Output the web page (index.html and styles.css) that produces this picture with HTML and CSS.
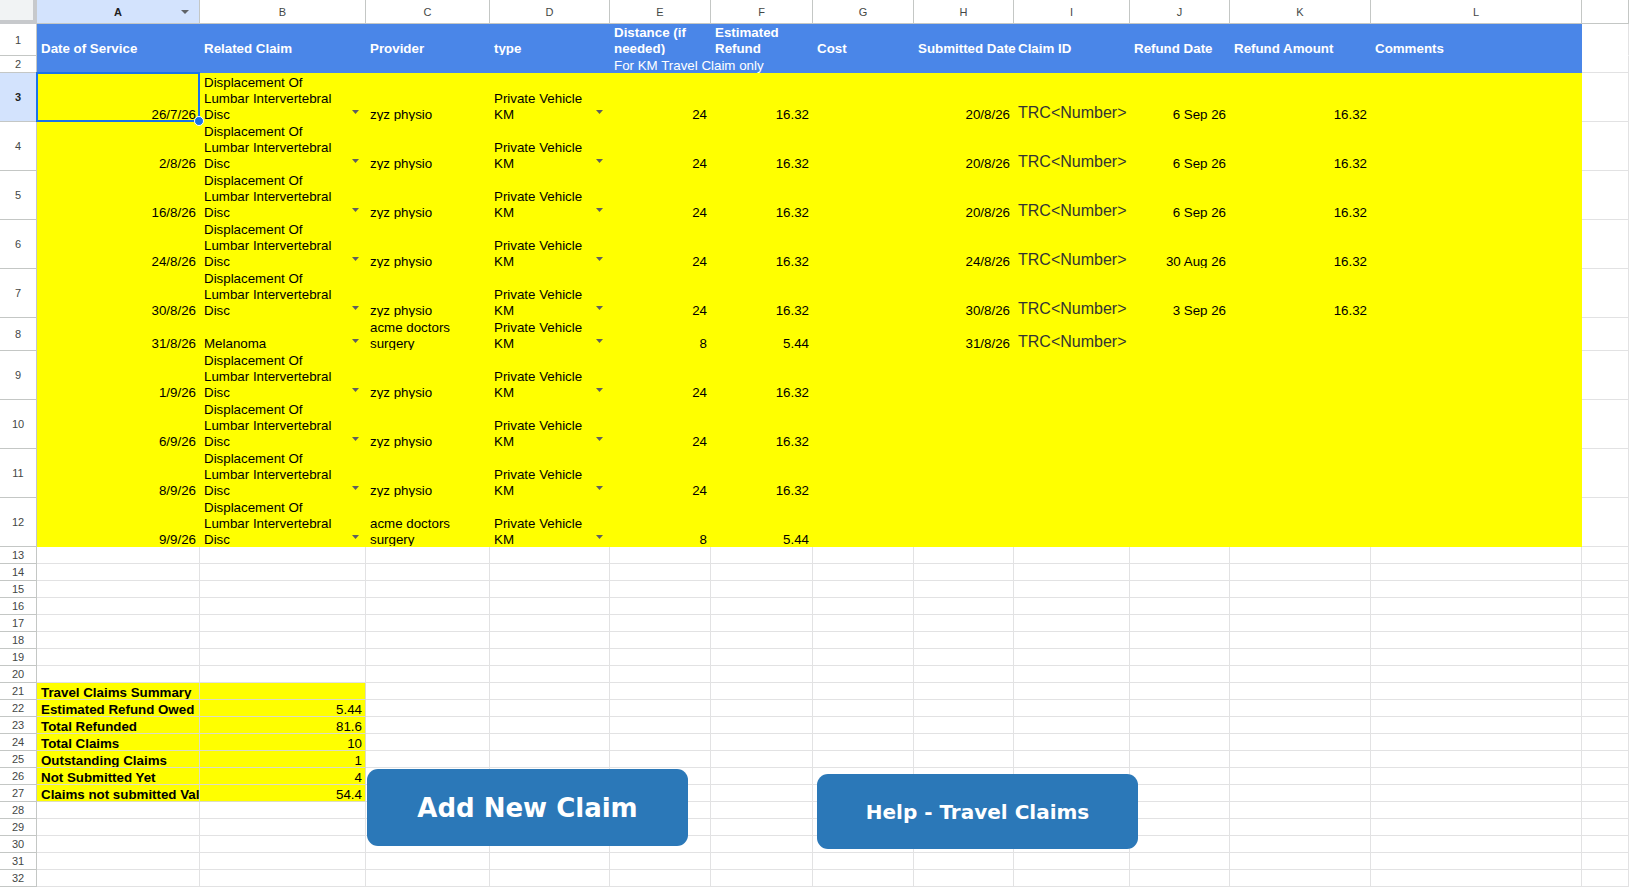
FILE: index.html
```html
<!DOCTYPE html>
<html lang="en">
<head>
<meta charset="utf-8">
<title>Travel Claims</title>
<link rel="stylesheet" href="styles.css">
</head>
<body>
<div class="sheet">
<div class="cn"></div><div class="ch sel">A<svg class="farr" viewBox="0 0 8 4"><path d="M0 0h8L4 4z"/></svg></div><div class="ch">B</div><div class="ch">C</div><div class="ch">D</div><div class="ch">E</div><div class="ch">F</div><div class="ch">G</div><div class="ch">H</div><div class="ch">I</div><div class="ch">J</div><div class="ch">K</div><div class="ch">L</div><div class="ch"></div>

<div class="rh">1</div><div class="b">Date of Service</div><div class="b">Related Claim</div><div class="b">Provider</div><div class="b">type</div><div class="b w">Distance (if needed)</div><div class="b w">Estimated Refund</div><div class="b">Cost</div><div class="b ov">Submitted Date</div><div class="b">Claim ID</div><div class="b">Refund Date</div><div class="b">Refund Amount</div><div class="b">Comments</div><div class="nb"></div>

<div class="rh">2</div><div class="b"></div><div class="b"></div><div class="b"></div><div class="b"></div><div class="b n ov">For KM Travel Claim only</div><div class="b"></div><div class="b"></div><div class="b"></div><div class="b"></div><div class="b"></div><div class="b"></div><div class="b"></div><div></div>

<div class="rh sel">3</div><div class="y r">26/7/26</div><div class="y dd"><span>Displacement Of Lumbar Intervertebral Disc</span><svg class="arr" viewBox="0 0 7 4"><path d="M0 0h7L3.5 4z"/></svg></div><div class="y">zyz physio</div><div class="y dd"><span>Private Vehicle KM</span><svg class="arr" viewBox="0 0 7 4"><path d="M0 0h7L3.5 4z"/></svg></div><div class="y r">24</div><div class="y r">16.32</div><div class="y"></div><div class="y r">20/8/26</div><div class="y trc">TRC&lt;Number&gt;</div><div class="y r">6 Sep 26</div><div class="y r">16.32</div><div class="y"></div><div></div>

<div class="rh">4</div><div class="y r">2/8/26</div><div class="y dd"><span>Displacement Of Lumbar Intervertebral Disc</span><svg class="arr" viewBox="0 0 7 4"><path d="M0 0h7L3.5 4z"/></svg></div><div class="y">zyz physio</div><div class="y dd"><span>Private Vehicle KM</span><svg class="arr" viewBox="0 0 7 4"><path d="M0 0h7L3.5 4z"/></svg></div><div class="y r">24</div><div class="y r">16.32</div><div class="y"></div><div class="y r">20/8/26</div><div class="y trc">TRC&lt;Number&gt;</div><div class="y r">6 Sep 26</div><div class="y r">16.32</div><div class="y"></div><div></div>

<div class="rh">5</div><div class="y r">16/8/26</div><div class="y dd"><span>Displacement Of Lumbar Intervertebral Disc</span><svg class="arr" viewBox="0 0 7 4"><path d="M0 0h7L3.5 4z"/></svg></div><div class="y">zyz physio</div><div class="y dd"><span>Private Vehicle KM</span><svg class="arr" viewBox="0 0 7 4"><path d="M0 0h7L3.5 4z"/></svg></div><div class="y r">24</div><div class="y r">16.32</div><div class="y"></div><div class="y r">20/8/26</div><div class="y trc">TRC&lt;Number&gt;</div><div class="y r">6 Sep 26</div><div class="y r">16.32</div><div class="y"></div><div></div>

<div class="rh">6</div><div class="y r">24/8/26</div><div class="y dd"><span>Displacement Of Lumbar Intervertebral Disc</span><svg class="arr" viewBox="0 0 7 4"><path d="M0 0h7L3.5 4z"/></svg></div><div class="y">zyz physio</div><div class="y dd"><span>Private Vehicle KM</span><svg class="arr" viewBox="0 0 7 4"><path d="M0 0h7L3.5 4z"/></svg></div><div class="y r">24</div><div class="y r">16.32</div><div class="y"></div><div class="y r">24/8/26</div><div class="y trc">TRC&lt;Number&gt;</div><div class="y r">30 Aug 26</div><div class="y r">16.32</div><div class="y"></div><div></div>

<div class="rh">7</div><div class="y r">30/8/26</div><div class="y dd"><span>Displacement Of Lumbar Intervertebral Disc</span><svg class="arr" viewBox="0 0 7 4"><path d="M0 0h7L3.5 4z"/></svg></div><div class="y">zyz physio</div><div class="y dd"><span>Private Vehicle KM</span><svg class="arr" viewBox="0 0 7 4"><path d="M0 0h7L3.5 4z"/></svg></div><div class="y r">24</div><div class="y r">16.32</div><div class="y"></div><div class="y r">30/8/26</div><div class="y trc">TRC&lt;Number&gt;</div><div class="y r">3 Sep 26</div><div class="y r">16.32</div><div class="y"></div><div></div>

<div class="rh">8</div><div class="y r">31/8/26</div><div class="y dd"><span>Melanoma</span><svg class="arr" viewBox="0 0 7 4"><path d="M0 0h7L3.5 4z"/></svg></div><div class="y w">acme doctors surgery</div><div class="y dd"><span>Private Vehicle KM</span><svg class="arr" viewBox="0 0 7 4"><path d="M0 0h7L3.5 4z"/></svg></div><div class="y r">8</div><div class="y r">5.44</div><div class="y"></div><div class="y r">31/8/26</div><div class="y trc">TRC&lt;Number&gt;</div><div class="y"></div><div class="y"></div><div class="y"></div><div></div>

<div class="rh">9</div><div class="y r">1/9/26</div><div class="y dd"><span>Displacement Of Lumbar Intervertebral Disc</span><svg class="arr" viewBox="0 0 7 4"><path d="M0 0h7L3.5 4z"/></svg></div><div class="y">zyz physio</div><div class="y dd"><span>Private Vehicle KM</span><svg class="arr" viewBox="0 0 7 4"><path d="M0 0h7L3.5 4z"/></svg></div><div class="y r">24</div><div class="y r">16.32</div><div class="y"></div><div class="y"></div><div class="y"></div><div class="y"></div><div class="y"></div><div class="y"></div><div></div>

<div class="rh">10</div><div class="y r">6/9/26</div><div class="y dd"><span>Displacement Of Lumbar Intervertebral Disc</span><svg class="arr" viewBox="0 0 7 4"><path d="M0 0h7L3.5 4z"/></svg></div><div class="y">zyz physio</div><div class="y dd"><span>Private Vehicle KM</span><svg class="arr" viewBox="0 0 7 4"><path d="M0 0h7L3.5 4z"/></svg></div><div class="y r">24</div><div class="y r">16.32</div><div class="y"></div><div class="y"></div><div class="y"></div><div class="y"></div><div class="y"></div><div class="y"></div><div></div>

<div class="rh">11</div><div class="y r">8/9/26</div><div class="y dd"><span>Displacement Of Lumbar Intervertebral Disc</span><svg class="arr" viewBox="0 0 7 4"><path d="M0 0h7L3.5 4z"/></svg></div><div class="y">zyz physio</div><div class="y dd"><span>Private Vehicle KM</span><svg class="arr" viewBox="0 0 7 4"><path d="M0 0h7L3.5 4z"/></svg></div><div class="y r">24</div><div class="y r">16.32</div><div class="y"></div><div class="y"></div><div class="y"></div><div class="y"></div><div class="y"></div><div class="y"></div><div></div>

<div class="rh">12</div><div class="y r">9/9/26</div><div class="y dd"><span>Displacement Of Lumbar Intervertebral Disc</span><svg class="arr" viewBox="0 0 7 4"><path d="M0 0h7L3.5 4z"/></svg></div><div class="y w">acme doctors surgery</div><div class="y dd"><span>Private Vehicle KM</span><svg class="arr" viewBox="0 0 7 4"><path d="M0 0h7L3.5 4z"/></svg></div><div class="y r">8</div><div class="y r">5.44</div><div class="y"></div><div class="y"></div><div class="y"></div><div class="y"></div><div class="y"></div><div class="y"></div><div></div>

<div class="rh">13</div><div></div><div></div><div></div><div></div><div></div><div></div><div></div><div></div><div></div><div></div><div></div><div></div><div></div>
<div class="rh">14</div><div></div><div></div><div></div><div></div><div></div><div></div><div></div><div></div><div></div><div></div><div></div><div></div><div></div>
<div class="rh">15</div><div></div><div></div><div></div><div></div><div></div><div></div><div></div><div></div><div></div><div></div><div></div><div></div><div></div>
<div class="rh">16</div><div></div><div></div><div></div><div></div><div></div><div></div><div></div><div></div><div></div><div></div><div></div><div></div><div></div>
<div class="rh">17</div><div></div><div></div><div></div><div></div><div></div><div></div><div></div><div></div><div></div><div></div><div></div><div></div><div></div>
<div class="rh">18</div><div></div><div></div><div></div><div></div><div></div><div></div><div></div><div></div><div></div><div></div><div></div><div></div><div></div>
<div class="rh">19</div><div></div><div></div><div></div><div></div><div></div><div></div><div></div><div></div><div></div><div></div><div></div><div></div><div></div>
<div class="rh">20</div><div></div><div></div><div></div><div></div><div></div><div></div><div></div><div></div><div></div><div></div><div></div><div></div><div></div>

<div class="rh">21</div><div class="sm bo">Travel Claims Summary</div><div class="sm"></div><div></div><div></div><div></div><div></div><div></div><div></div><div></div><div></div><div></div><div></div><div></div>
<div class="rh">22</div><div class="sm bo">Estimated Refund Owed</div><div class="sm r">5.44</div><div></div><div></div><div></div><div></div><div></div><div></div><div></div><div></div><div></div><div></div><div></div>
<div class="rh">23</div><div class="sm bo">Total Refunded</div><div class="sm r">81.6</div><div></div><div></div><div></div><div></div><div></div><div></div><div></div><div></div><div></div><div></div><div></div>
<div class="rh">24</div><div class="sm bo">Total Claims</div><div class="sm r">10</div><div></div><div></div><div></div><div></div><div></div><div></div><div></div><div></div><div></div><div></div><div></div>
<div class="rh">25</div><div class="sm bo">Outstanding Claims</div><div class="sm r">1</div><div></div><div></div><div></div><div></div><div></div><div></div><div></div><div></div><div></div><div></div><div></div>
<div class="rh">26</div><div class="sm bo">Not Submitted Yet</div><div class="sm r">4</div><div></div><div></div><div></div><div></div><div></div><div></div><div></div><div></div><div></div><div></div><div></div>
<div class="rh">27</div><div class="sm bo">Claims not submitted Val</div><div class="sm r">54.4</div><div></div><div></div><div></div><div></div><div></div><div></div><div></div><div></div><div></div><div></div><div></div>

<div class="rh">28</div><div></div><div></div><div></div><div></div><div></div><div></div><div></div><div></div><div></div><div></div><div></div><div></div><div></div>
<div class="rh">29</div><div></div><div></div><div></div><div></div><div></div><div></div><div></div><div></div><div></div><div></div><div></div><div></div><div></div>
<div class="rh">30</div><div></div><div></div><div></div><div></div><div></div><div></div><div></div><div></div><div></div><div></div><div></div><div></div><div></div>
<div class="rh">31</div><div></div><div></div><div></div><div></div><div></div><div></div><div></div><div></div><div></div><div></div><div></div><div></div><div></div>
<div class="rh">32</div><div></div><div></div><div></div><div></div><div></div><div></div><div></div><div></div><div></div><div></div><div></div><div></div><div></div>
</div>

<div class="selbox"></div>
<div class="handle"></div>

<div class="btn btn-add">Add New Claim</div>
<div class="btn btn-help">Help - Travel Claims</div>
</body>
</html>
```

FILE: styles.css
```css
* { box-sizing: border-box; margin: 0; padding: 0; }
html, body { width: 1629px; height: 890px; overflow: hidden; background: #fff; }
body {
  position: relative;
  font-family: "Liberation Sans", Arial, sans-serif;
  font-size: 10pt;
  color: #000;
}

.sheet {
  display: grid;
  grid-template-columns: 37px 163px 166px 124px 120px 101px 102px 101px 100px 116px 100px 141px 211px 47px;
  grid-template-rows: 24px 32px 17px repeat(5, 49px) 33px repeat(4, 49px) repeat(20, 17px);
}

/* every cell: text sits on the bottom of the cell, like the spreadsheet */
.sheet > :where(div) {
  display: flex;
  flex-direction: column;
  justify-content: flex-end;
  align-items: flex-start;
  min-width: 0;
  padding: 0 3px 0 4px;
  line-height: 16px;
  white-space: nowrap;
  overflow: hidden;
  border-right: 1px solid #e2e2e3;
  border-bottom: 1px solid #e2e2e3;
}
/* lets the last text line sit 2px lower, as in the sheet */
.sheet > :where(div)::after {
  content: "";
  margin-top: -2px;
}

/* headers */
.cn {
  background: #f1f3f4;
  border-right: 4px solid #c7c9cc;
  border-bottom: 4px solid #c7c9cc;
}
.ch {
  position: relative;
  align-items: center;
  justify-content: center;
  padding: 0 3px;
  font-size: 11px;
  color: #444746;
  background: #fff;
  border-right-color: #c4c7c5;
  border-bottom-color: #c4c7c5;
}
.rh {
  align-items: center;
  justify-content: center;
  padding: 0 3px;
  font-size: 11px;
  color: #444746;
  background: #fff;
  border-right-color: #c4c7c5;
  border-bottom-color: #c4c7c5;
}
.ch::after, .rh::after, .cn::after { display: none; }
.sel {
  background: #d3e3fd;
  font-weight: bold;
  color: #1f1f1f;
}
.farr {
  position: absolute;
  right: 10px;
  top: 10px;
  width: 8px;
  height: 4px;
  fill: #5f6368;
}

/* cell fills */
.b {
  background: #4a86e8;
  border-color: #4a86e8;
  color: #fff;
  font-weight: bold;
}
.b.n { font-weight: normal; }
.y {
  background: #ffff00;
  border-color: #ffff00;
}
.sm {
  background: #ffff00;
  border-color: #dcdcc4;
}
.bo { font-weight: bold; }
.r { align-items: flex-end; padding-right: 3px; }
.w { align-items: stretch; white-space: normal; }
.ov {
  position: relative;
  z-index: 1;
  overflow: visible;
}
.nb { border-bottom-color: transparent; }

.trc {
  font-size: 12pt;
  line-height: 18px;
  color: #333;
}
.trc::after { margin-top: -1px; }

/* dropdown chip cells */
.dd {
  flex-direction: row;
  align-items: flex-end;
  justify-content: flex-start;
  padding-right: 6px;
}
.dd::after { display: none; }
.dd span {
  flex: 1 1 0;
  min-width: 0;
  margin-bottom: -2px;
  white-space: normal;
}
.arr {
  flex: none;
  width: 7px;
  height: 4px;
  margin: 0 0 7px 8px;
  fill: #5f5f5f;
}

/* selection */
.selbox {
  position: absolute;
  left: 36px;
  top: 72px;
  width: 164px;
  height: 50px;
  border: 2px solid #1a73e8;
}
.handle {
  position: absolute;
  left: 194px;
  top: 116px;
  width: 10px;
  height: 10px;
  border-radius: 50%;
  background: #1a73e8;
  border: 1px solid #fff;
}

/* drawing buttons */
.btn {
  position: absolute;
  display: flex;
  align-items: center;
  justify-content: center;
  background: #2b78b8;
  color: #fff;
  border-radius: 11px;
  font-family: "DejaVu Sans", sans-serif;
  font-weight: bold;
  white-space: nowrap;
}
.btn-add {
  left: 367px;
  top: 769px;
  width: 321px;
  height: 77px;
  font-size: 26px;
}
.btn-help {
  left: 817px;
  top: 774px;
  width: 321px;
  height: 75px;
  font-size: 20px;
}
```
